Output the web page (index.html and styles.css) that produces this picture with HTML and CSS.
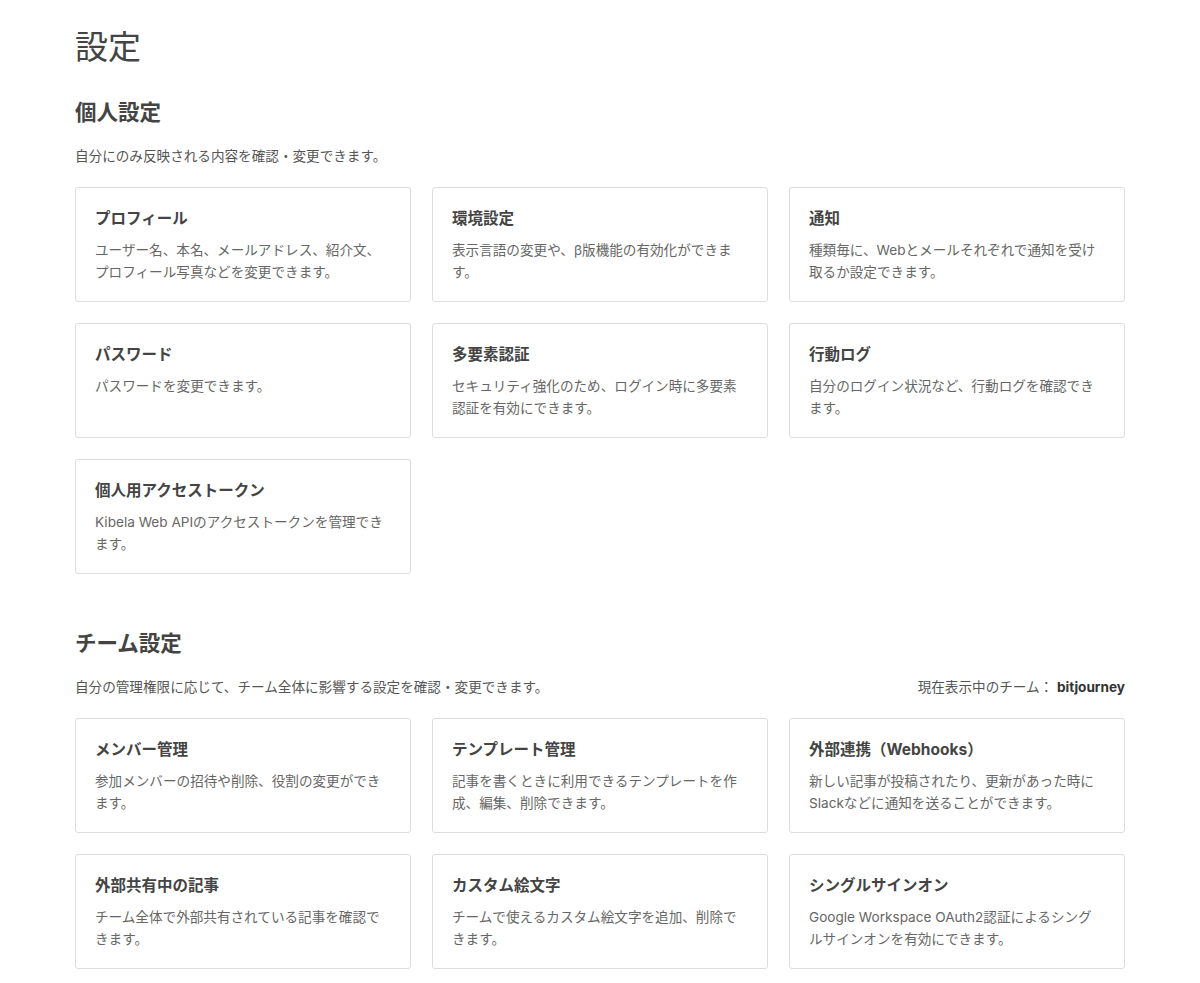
FILE: index.html
```html
<!DOCTYPE html>
<html lang="ja">
<head>
    <meta charset="UTF-8">
    <meta name="viewport" content="width=device-width, initial-scale=1.0">
    <title>設定</title>
    <link rel="stylesheet" href="styles.css">
</head>
<body>

    <main class="settings">

        <h1 class="page-title">設定</h1>

        <section class="section">
            <h2 class="section-title">個人設定</h2>
            <div class="section-desc">
                <p>自分にのみ反映される内容を確認・変更できます。</p>
            </div>

            <div class="card-grid">
                <a class="card" href="#">
                    <h3>プロフィール</h3>
                    <p>ユーザー名、本名、メールアドレス、紹介文、プロフィール写真などを変更できます。</p>
                </a>
                <a class="card" href="#">
                    <h3>環境設定</h3>
                    <p>表示言語の変更や、β版機能の有効化ができます。</p>
                </a>
                <a class="card" href="#">
                    <h3>通知</h3>
                    <p>種類毎に、Webとメールそれぞれで通知を受け取るか設定できます。</p>
                </a>
                <a class="card" href="#">
                    <h3>パスワード</h3>
                    <p>パスワードを変更できます。</p>
                </a>
                <a class="card" href="#">
                    <h3>多要素認証</h3>
                    <p>セキュリティ強化のため、ログイン時に多要素認証を有効にできます。</p>
                </a>
                <a class="card" href="#">
                    <h3>行動ログ</h3>
                    <p>自分のログイン状況など、行動ログを確認できます。</p>
                </a>
                <a class="card" href="#">
                    <h3>個人用アクセストークン</h3>
                    <p>Kibela Web APIのアクセストークンを管理できます。</p>
                </a>
            </div>
        </section>

        <section class="section">
            <h2 class="section-title">チーム設定</h2>
            <div class="section-desc">
                <p>自分の管理権限に応じて、チーム全体に影響する設定を確認・変更できます。</p>
                <p class="current-team">現在表示中のチーム： <strong>bitjourney</strong></p>
            </div>

            <div class="card-grid">
                <a class="card" href="#">
                    <h3>メンバー管理</h3>
                    <p>参加メンバーの招待や削除、役割の変更ができます。</p>
                </a>
                <a class="card" href="#">
                    <h3>テンプレート管理</h3>
                    <p>記事を書くときに利用できるテンプレートを作成、編集、削除できます。</p>
                </a>
                <a class="card" href="#">
                    <h3>外部連携（Webhooks）</h3>
                    <p>新しい記事が投稿されたり、更新があった時にSlackなどに通知を送ることができます。</p>
                </a>
                <a class="card" href="#">
                    <h3>外部共有中の記事</h3>
                    <p>チーム全体で外部共有されている記事を確認できます。</p>
                </a>
                <a class="card" href="#">
                    <h3>カスタム絵文字</h3>
                    <p>チームで使えるカスタム絵文字を追加、削除できます。</p>
                </a>
                <a class="card" href="#">
                    <h3>シングルサインオン</h3>
                    <p>Google Workspace OAuth2認証によるシングルサインオンを有効にできます。</p>
                </a>
            </div>
        </section>

    </main>

</body>
</html>
```

FILE: styles.css
```css
body {
    margin: 0;
    background-color: #fff;
    color: #555;
    font-family: Inter, "Noto Sans CJK JP", sans-serif;
}

.settings {
    width: 1050px;
    margin: 0 auto;
    padding-top: 27px;
    padding-bottom: 40px;
}

.page-title {
    margin: 0;
    font-size: 33px;
    line-height: 40px;
    font-weight: 400;
    color: #444;
}

.section {
    margin-top: 30px;
}

.section + .section {
    margin-top: 54px;
}

.section-title {
    margin: 0;
    font-size: 21.5px;
    line-height: 30px;
    font-weight: 700;
    color: #444;
}

.section-desc {
    display: flex;
    justify-content: space-between;
    align-items: center;
    margin-top: 19px;
    margin-bottom: 21px;
}

.section-desc p {
    margin: 0;
    font-size: 13.6px;
    line-height: 20px;
}

.current-team {
    color: #555;
}

.current-team strong {
    color: #333;
    font-weight: 700;
}

.card-grid {
    display: grid;
    grid-template-columns: repeat(3, 1fr);
    gap: 21px;
}

.card {
    display: block;
    min-height: 75px;
    padding: 20px 19px 18px 19px;
    border: 1px solid #ddd;
    border-radius: 3px;
    color: inherit;
    text-decoration: none;
}

.card h3 {
    margin: 0 0 9px;
    font-size: 15.5px;
    line-height: 22px;
    font-weight: 700;
    color: #444;
}

.card p {
    margin: 0;
    font-size: 13.6px;
    line-height: 22px;
    color: #666;
}
```
